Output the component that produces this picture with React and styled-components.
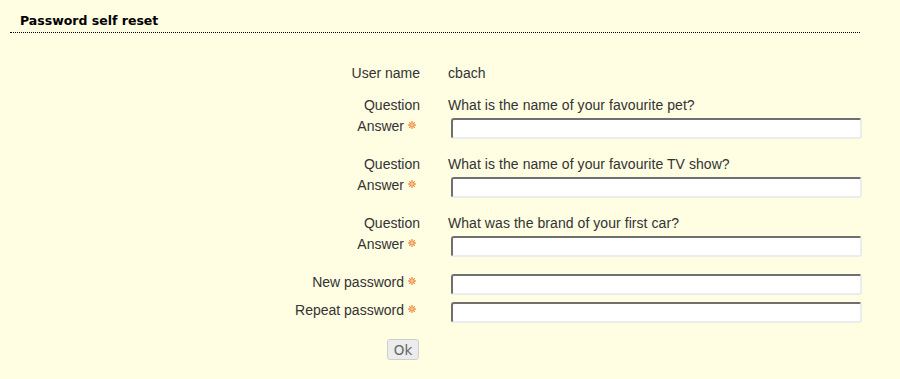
import React from 'react';
import styled, { createGlobalStyle } from 'styled-components';

const GlobalStyle = createGlobalStyle`
  html, body {
    margin: 0;
    padding: 0;
    background: #fffde2;
  }
  body {
    font-family: "Liberation Sans", Arial, sans-serif;
    font-size: 14px;
    color: #333;
  }
`;

const Page = styled.div`
  width: 900px;
  min-height: 379px;
  background: #fffde2;
`;

const Header = styled.h2`
  margin: 0 0 0 10px;
  width: 850px;
  box-sizing: border-box;
  padding: 13px 0 3px 10px;
  border-bottom: 1px dotted #000;
  font-family: "DejaVu Sans", Verdana, sans-serif;
  font-weight: bold;
  font-size: 12.5px;
  line-height: 16px;
  color: #000;
`;

const Form = styled.form`
  display: flex;
  flex-direction: column;
  padding-top: 32px;
`;

const Row = styled.div`
  display: grid;
  grid-template-columns: 420px 414px;
  column-gap: 28px;
  align-items: start;
  margin-top: ${props => props.gap || 0}px;
`;

const Label = styled.div`
  display: flex;
  justify-content: flex-end;
  align-items: flex-start;
  line-height: 16px;
  white-space: nowrap;
`;

const Value = styled.div`
  line-height: 16px;
  white-space: nowrap;
  letter-spacing: 0.06px;
`;

const Star = styled.svg`
  width: 8px;
  height: 8px;
  margin: 3px 4px 0 4px;
  flex-shrink: 0;
`;

const TextInput = styled.input`
  display: block;
  box-sizing: border-box;
  width: 411px;
  height: 21px;
  margin: 0 0 0 3px;
  padding: 1px 4px;
  background: #fff;
  border-style: solid;
  border-width: 2px;
  border-color: #6f6f6f #ececec #ececec #6f6f6f;
  border-radius: 3px;
  font-family: "Liberation Sans", Arial, sans-serif;
  font-size: 13px;
  outline: none;
`;

const ButtonCell = styled.div`
  display: flex;
  justify-content: flex-end;
  padding-right: 1px;
`;

const OkButton = styled.button`
  width: 32px;
  height: 21px;
  padding: 0;
  background: #ececec;
  border: 1px solid #cfcfcf;
  border-radius: 3px;
  color: #666;
  font-family: "DejaVu Sans", Verdana, sans-serif;
  font-size: 13.5px;
  line-height: 18px;
`;

function RequiredStar() {
  return (
    <Star viewBox="0 0 8 8" aria-hidden="true">
      <g stroke="#f08a3c" strokeWidth="1.3" strokeLinecap="round">
        <line x1="4" y1="0.6" x2="4" y2="7.4" />
        <line x1="0.6" y1="4" x2="7.4" y2="4" />
        <line x1="1.6" y1="1.6" x2="6.4" y2="6.4" />
        <line x1="6.4" y1="1.6" x2="1.6" y2="6.4" />
      </g>
      <circle cx="4" cy="4" r="1.4" fill="#f9c48f" />
    </Star>
  );
}

function FieldLabel({ children, required }) {
  return (
    <Label>
      {children}
      {required && <RequiredStar />}
    </Label>
  );
}

const questions = [
  'What is the name of your favourite pet?',
  'What is the name of your favourite TV show?',
  'What was the brand of your first car?'
];

export default function App() {
  return (
    <Page>
      <GlobalStyle />
      <Header>Password self reset</Header>
      <Form onSubmit={e => e.preventDefault()}>
        <Row>
          <FieldLabel>User name</FieldLabel>
          <Value>cbach</Value>
        </Row>

        {questions.map((question, index) => (
          <React.Fragment key={index}>
            <Row gap={index === 0 ? 16 : 17}>
              <FieldLabel>Question</FieldLabel>
              <Value>{question}</Value>
            </Row>
            <Row gap={5}>
              <FieldLabel required>Answer</FieldLabel>
              <TextInput type="text" />
            </Row>
          </React.Fragment>
        ))}

        <Row gap={17}>
          <FieldLabel required>New password</FieldLabel>
          <TextInput type="password" />
        </Row>
        <Row gap={7}>
          <FieldLabel required>Repeat password</FieldLabel>
          <TextInput type="password" />
        </Row>
        <Row gap={16}>
          <ButtonCell>
            <OkButton type="submit">Ok</OkButton>
          </ButtonCell>
        </Row>
      </Form>
    </Page>
  );
}
